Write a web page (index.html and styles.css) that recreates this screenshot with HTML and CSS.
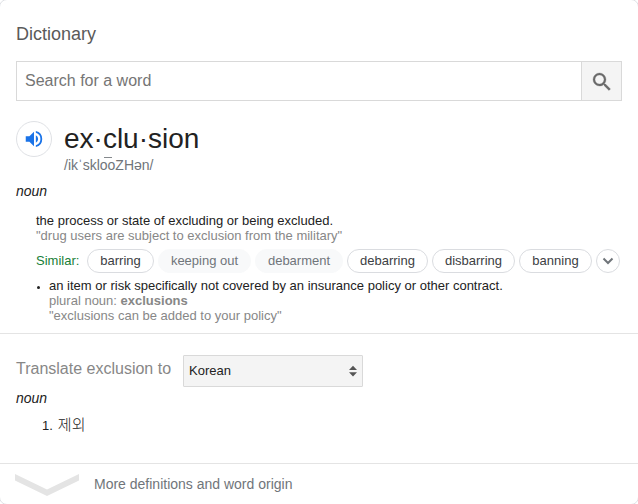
FILE: index.html
```html
<!DOCTYPE html>
<html lang="en">
<head>
<meta charset="utf-8">
<title>Dictionary</title>
<link rel="stylesheet" href="styles.css">
</head>
<body>
<main class="card">
  <section class="entry">
    <h1 class="title"><span>Dictionary</span></h1>
    <form class="search">
      <input class="search-input" type="text" placeholder="Search for a word" aria-label="Search for a word">
      <button class="search-button" type="button" aria-label="Search">
        <svg width="24" height="24" viewBox="0 0 24 24" fill="#6a6a6a" stroke="#6a6a6a" stroke-width=".3"><path d="M15.5 14h-.79l-.28-.27A6.47 6.47 0 0 0 16 9.5 6.5 6.5 0 1 0 9.5 16c1.61 0 3.09-.59 4.23-1.57l.27.28v.79l5 4.99L20.49 19l-4.99-5zm-6 0C7.01 14 5 11.99 5 9.5S7.01 5 9.5 5 14 7.01 14 9.5 11.99 14 9.5 14z"/></svg>
      </button>
    </form>
    <div class="headword">
      <button class="speaker" type="button" aria-label="Listen">
        <svg width="22" height="22" viewBox="0 0 24 24" fill="#1a73e8"><path d="M3 9v6h4l5 5V4L7 9H3zm13.5 3A4.5 4.5 0 0 0 14 7.97v8.05A4.47 4.47 0 0 0 16.5 12zM14 3.23v2.06a7 7 0 0 1 0 13.42v2.06a9 9 0 0 0 0-17.54z"/></svg>
      </button>
      <div>
        <div class="word"><span>ex·clu·sion</span></div>
        <div class="phonetic"><span>/ikˈskl<span class="macron">oo</span>ZHən/</span></div>
      </div>
    </div>
    <div class="pos"><span>noun</span></div>
    <div class="senses">
      <div class="line"><span class="def-one">the process or state of excluding or being excluded.</span></div>
      <div class="line muted"><span class="ex-one">"drug users are subject to exclusion from the military"</span></div>
      <div class="similar">
        <span class="similar-label">Similar:</span>
        <span class="chip c1">barring</span>
        <span class="chip soft c2">keeping out</span>
        <span class="chip soft c3">debarment</span>
        <span class="chip c4">debarring</span>
        <span class="chip c5">disbarring</span>
        <span class="chip c6">banning</span>
        <span class="chip more"><svg width="12" height="8" viewBox="0 0 12 8" fill="none" stroke="#70757a" stroke-width="2"><path d="M1.5 1.5 6 6l4.5-4.5"/></svg></span>
      </div>
      <div class="subsense">
        <div class="line"><span class="def-two">an item or risk specifically not covered by an insurance policy or other contract.</span></div>
        <div class="line muted"><span class="plural">plural noun: <b>exclusions</b></span></div>
        <div class="line muted"><span class="ex-two">"exclusions can be added to your policy"</span></div>
      </div>
    </div>
  </section>
  <section class="translate">
    <div class="translate-row">
      <span class="translate-label">Translate exclusion to</span>
      <div class="select"><span>Korean</span>
        <svg width="8" height="12" viewBox="0 0 8 12" fill="#555"><path d="M0 5 4 0.8 8 5zM0 7.2h8L4 11.4z"/></svg>
      </div>
    </div>
    <div class="pos"><span>noun</span></div>
    <div class="result"><span>1.</span><span class="korean" lang="ko">제외</span></div>
  </section>
  <footer class="footer">
    <svg width="64" height="22" viewBox="0 0 64 22" fill="#e4e4e4"><path d="M0 0 32 15.5 64 0v6.5L32 22 0 6.5z"/></svg>
    <span class="footer-text">More definitions and word origin</span>
  </footer>
</main>
</body>
</html>
```
FILE: styles.css
```css
* { box-sizing: border-box; }
html { background: #fff; overflow: hidden; }
body { margin: 0; font: 13px/15px "Liberation Sans", Arial, sans-serif; color: #222; overflow: hidden; }
button { padding: 0; font: inherit; }
svg { display: block; flex: none; }

.card { width: 640px; height: 506px; margin: -1px; border: 1px solid #dfe1e5; border-radius: 8px; background: #fff; }

.entry { height: 334px; padding: 24px 16px 0; border-bottom: 1px solid #e4e4e4; }
.title { margin: 0; font-size: 18px; font-weight: 400; line-height: 20px; color: #5a5a5a; }
.search { display: flex; height: 40px; margin: 17px 0 0; border: 1px solid #d9d9d9; }
.search-input { flex: 1; min-width: 0; padding: 0 8px; border: 0; outline: 0; font: 16px "Liberation Sans", Arial, sans-serif; color: #222; }
.search-input::placeholder { color: #757575; opacity: 1; }
.search-button { width: 40px; display: grid; place-items: center; border: 0; border-left: 1px solid #d9d9d9; background: #f4f4f4; }
.search-button svg { margin-top: 2px; }

.headword { display: flex; gap: 12px; padding-top: 20px; height: 80px; }
.speaker { width: 36px; height: 36px; display: grid; place-items: center; border: 1px solid #dfe1e5; border-radius: 50%; background: #fff; }
.word { font-size: 28px; line-height: 36px; }
.phonetic { font-size: 14px; line-height: 17px; color: #70757a; }
.macron { position: relative; }
.macron::before { content: ""; position: absolute; left: 4px; top: 0; width: 8px; height: 1px; background: #85898d; }
.pos { font-size: 14px; font-style: italic; line-height: 20px; }

.senses { padding: 12px 0 0 20px; }
.line { white-space: nowrap; }
.muted { color: #878787; }
.similar { display: flex; align-items: center; height: 24px; margin: 6px 0 5px; white-space: nowrap; }
.similar-label { width: 51px; padding-bottom: 1px; color: #188038; }
.chip { height: 24px; padding-bottom: 1px; margin-right: 4px; display: flex; align-items: center; justify-content: center; border: 1px solid #dadce0; border-radius: 12px; color: #3c4043; }
.soft { border-color: #f8f9fa; background: #f8f9fa; color: #70757a; }
.c1 { width: 67px; }
.c2 { width: 93px; }
.c3 { width: 88px; }
.c4 { width: 81px; }
.c5 { width: 83px; }
.c6 { width: 73px; }
.more { width: 24px; margin-right: 0; padding-bottom: 0; }
.subsense { position: relative; padding-left: 13px; }
.subsense::before { content: ""; position: absolute; left: 1px; top: 8px; width: 3px; height: 3px; border-radius: 50%; background: #222; }

.translate { height: 130px; padding: 21px 16px 0; border-bottom: 1px solid #e4e4e4; }
.translate-row { display: flex; height: 33px; }
.translate-label { width: 167px; padding-top: 4px; font-size: 16px; line-height: 20px; color: #878787; white-space: nowrap; }
.select { width: 180px; height: 32px; display: flex; align-items: center; justify-content: space-between; padding: 0 5px; border: 1px solid #d9d9d9; border-radius: 1px; background: #f4f4f4; }
.select span { padding-bottom: 2px; }
.result { display: flex; gap: 5px; padding: 8px 0 0 26px; line-height: 20px; }
.korean { margin-top: -2px; font-family: "Noto Sans CJK KR", sans-serif; font-weight: 300; font-size: 15px; }

.footer { display: flex; align-items: center; gap: 15px; height: 41px; padding-left: 15px; font-size: 14px; color: #70757a; }
```
